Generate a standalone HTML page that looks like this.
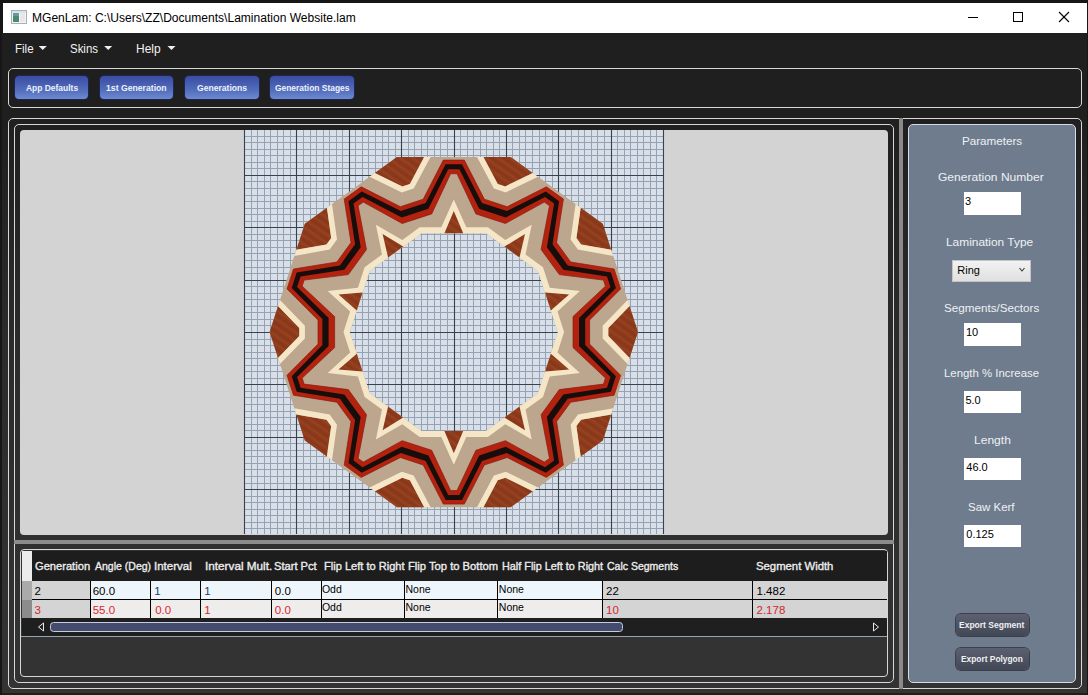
<!DOCTYPE html>
<html><head><meta charset="utf-8">
<style>
*{box-sizing:border-box;margin:0;padding:0}
html,body{width:1088px;height:695px;overflow:hidden}
body{position:relative;background:#161616;font-family:"Liberation Sans",sans-serif}
.a{position:absolute}
.t{position:absolute;white-space:nowrap;line-height:1;transform-origin:0 0}
#app{left:2px;top:33px;width:1085px;height:662px;background:linear-gradient(#1f1f1f 0px,#1f1f1f 80px,#2b2b2b 300px,#333 640px)}
#title{left:3px;top:3px;width:1084px;height:30px;background:#fff}
.bord{border:1px solid #d8d8d8}
.btn{position:absolute;top:76px;height:23px;border-radius:4px;background:linear-gradient(#3a4ba3,#5470bd 65%,#6f8ad2);box-shadow:0 0 0 1px #1c2650}
.inp{position:absolute;background:#fff;left:963.5px;width:57px;height:22.5px}
.xb{position:absolute;left:956px;width:73px;height:22px;border-radius:5px;background:linear-gradient(#5c6070,#424755);box-shadow:0 0 0 1px #3a3f4a}
.mn{stroke:#94a2b2;stroke-width:1}
.mj{stroke:#36424c;stroke-width:1.1}
</style></head><body>
<div id="app" class="a"></div>
<div id="title" class="a"></div>
<svg class="a" style="left:11px;top:10px" width="16" height="14" viewBox="0 0 16 14">
 <rect x="0.5" y="0.5" width="15" height="13" fill="#f2f6f8" stroke="#a8b0b2"/>
 <rect x="1" y="1" width="14" height="2" fill="#d8e4ec"/>
 <rect x="2" y="3" width="6" height="9" fill="#4a8878"/>
 <rect x="2" y="3" width="6" height="3" fill="#6a98a0"/>
 <rect x="9" y="3" width="5" height="9" fill="#ece4e6"/>
</svg>
<svg class="a" style="left:960px;top:8px" width="120" height="20">
 <line x1="8" y1="9.5" x2="18" y2="9.5" stroke="#000" stroke-width="1"/>
 <rect x="53.5" y="4.5" width="9" height="9" fill="none" stroke="#000" stroke-width="1"/>
 <line x1="99" y1="4" x2="109" y2="14" stroke="#000" stroke-width="1.1"/>
 <line x1="109" y1="4" x2="99" y2="14" stroke="#000" stroke-width="1.1"/>
</svg>
<svg class="a" style="left:0;top:40px" width="200" height="20">
 <polygon points="38.7,6 46.8,6 42.75,10" fill="#f0f0f0"/>
 <polygon points="104.2,6 112.2,6 108.2,10" fill="#f0f0f0"/>
 <polygon points="167.5,6 175.5,6 171.5,10" fill="#f0f0f0"/>
</svg>
<div class="a bord" style="left:8px;top:68px;width:1074px;height:40px;border-radius:5px"></div>
<div class="btn" style="left:15px;width:73px"></div>
<div class="btn" style="left:100px;width:73px"></div>
<div class="btn" style="left:185px;width:74px"></div>
<div class="btn" style="left:270px;width:84px"></div>
<div class="a bord" style="left:8px;top:118px;width:1074px;height:571px;border-radius:5px"></div>
<div class="a bord" style="left:14px;top:124px;width:880px;height:559px;border-radius:5px"></div>
<div class="a" style="left:899px;top:118px;width:4px;height:571px;background:#8a8a8a"></div>
<div class="a" style="left:14px;top:540px;width:880px;height:4px;background:#8c8c8c"></div>
<div class="a" style="left:20px;top:130px;width:868px;height:405px;background:#d3d3d3;border-radius:4px;overflow:hidden"></div>
<svg class="a" style="left:0;top:0" width="1088" height="695">
 <defs><pattern id="wood" width="13" height="7" patternUnits="userSpaceOnUse" patternTransform="rotate(35)">
  <rect width="13" height="7" fill="#8e3b1c"/>
  <path d="M0,1.5 Q6,0.5 13,1.8" stroke="#6e2810" stroke-width="0.9" fill="none" opacity=".4"/>
  <path d="M0,4.5 Q7,5.8 13,4.6" stroke="#b85e30" stroke-width="1" fill="none" opacity=".35"/>
 </pattern></defs>
 <rect x="244.6" y="130" width="418.79999999999995" height="404" fill="#d8dfe8"/>
 <line x1="251.50" y1="130" x2="251.50" y2="534" class="mn"/>
<line x1="257.50" y1="130" x2="257.50" y2="534" class="mn"/>
<line x1="264.50" y1="130" x2="264.50" y2="534" class="mn"/>
<line x1="270.50" y1="130" x2="270.50" y2="534" class="mn"/>
<line x1="277.50" y1="130" x2="277.50" y2="534" class="mn"/>
<line x1="283.50" y1="130" x2="283.50" y2="534" class="mn"/>
<line x1="290.50" y1="130" x2="290.50" y2="534" class="mn"/>
<line x1="303.50" y1="130" x2="303.50" y2="534" class="mn"/>
<line x1="310.50" y1="130" x2="310.50" y2="534" class="mn"/>
<line x1="316.50" y1="130" x2="316.50" y2="534" class="mn"/>
<line x1="323.50" y1="130" x2="323.50" y2="534" class="mn"/>
<line x1="329.50" y1="130" x2="329.50" y2="534" class="mn"/>
<line x1="336.50" y1="130" x2="336.50" y2="534" class="mn"/>
<line x1="342.50" y1="130" x2="342.50" y2="534" class="mn"/>
<line x1="355.50" y1="130" x2="355.50" y2="534" class="mn"/>
<line x1="362.50" y1="130" x2="362.50" y2="534" class="mn"/>
<line x1="368.50" y1="130" x2="368.50" y2="534" class="mn"/>
<line x1="375.50" y1="130" x2="375.50" y2="534" class="mn"/>
<line x1="382.50" y1="130" x2="382.50" y2="534" class="mn"/>
<line x1="388.50" y1="130" x2="388.50" y2="534" class="mn"/>
<line x1="395.50" y1="130" x2="395.50" y2="534" class="mn"/>
<line x1="408.50" y1="130" x2="408.50" y2="534" class="mn"/>
<line x1="414.50" y1="130" x2="414.50" y2="534" class="mn"/>
<line x1="421.50" y1="130" x2="421.50" y2="534" class="mn"/>
<line x1="427.50" y1="130" x2="427.50" y2="534" class="mn"/>
<line x1="434.50" y1="130" x2="434.50" y2="534" class="mn"/>
<line x1="440.50" y1="130" x2="440.50" y2="534" class="mn"/>
<line x1="447.50" y1="130" x2="447.50" y2="534" class="mn"/>
<line x1="460.50" y1="130" x2="460.50" y2="534" class="mn"/>
<line x1="467.50" y1="130" x2="467.50" y2="534" class="mn"/>
<line x1="473.50" y1="130" x2="473.50" y2="534" class="mn"/>
<line x1="480.50" y1="130" x2="480.50" y2="534" class="mn"/>
<line x1="486.50" y1="130" x2="486.50" y2="534" class="mn"/>
<line x1="493.50" y1="130" x2="493.50" y2="534" class="mn"/>
<line x1="499.50" y1="130" x2="499.50" y2="534" class="mn"/>
<line x1="512.50" y1="130" x2="512.50" y2="534" class="mn"/>
<line x1="519.50" y1="130" x2="519.50" y2="534" class="mn"/>
<line x1="525.50" y1="130" x2="525.50" y2="534" class="mn"/>
<line x1="532.50" y1="130" x2="532.50" y2="534" class="mn"/>
<line x1="539.50" y1="130" x2="539.50" y2="534" class="mn"/>
<line x1="545.50" y1="130" x2="545.50" y2="534" class="mn"/>
<line x1="552.50" y1="130" x2="552.50" y2="534" class="mn"/>
<line x1="565.50" y1="130" x2="565.50" y2="534" class="mn"/>
<line x1="571.50" y1="130" x2="571.50" y2="534" class="mn"/>
<line x1="578.50" y1="130" x2="578.50" y2="534" class="mn"/>
<line x1="584.50" y1="130" x2="584.50" y2="534" class="mn"/>
<line x1="591.50" y1="130" x2="591.50" y2="534" class="mn"/>
<line x1="597.50" y1="130" x2="597.50" y2="534" class="mn"/>
<line x1="604.50" y1="130" x2="604.50" y2="534" class="mn"/>
<line x1="617.50" y1="130" x2="617.50" y2="534" class="mn"/>
<line x1="624.50" y1="130" x2="624.50" y2="534" class="mn"/>
<line x1="630.50" y1="130" x2="630.50" y2="534" class="mn"/>
<line x1="637.50" y1="130" x2="637.50" y2="534" class="mn"/>
<line x1="643.50" y1="130" x2="643.50" y2="534" class="mn"/>
<line x1="650.50" y1="130" x2="650.50" y2="534" class="mn"/>
<line x1="656.50" y1="130" x2="656.50" y2="534" class="mn"/>
<line x1="244.60" y1="136.50" x2="663.40" y2="136.50" class="mn"/>
<line x1="244.60" y1="142.50" x2="663.40" y2="142.50" class="mn"/>
<line x1="244.60" y1="149.50" x2="663.40" y2="149.50" class="mn"/>
<line x1="244.60" y1="155.50" x2="663.40" y2="155.50" class="mn"/>
<line x1="244.60" y1="162.50" x2="663.40" y2="162.50" class="mn"/>
<line x1="244.60" y1="168.50" x2="663.40" y2="168.50" class="mn"/>
<line x1="244.60" y1="181.50" x2="663.40" y2="181.50" class="mn"/>
<line x1="244.60" y1="188.50" x2="663.40" y2="188.50" class="mn"/>
<line x1="244.60" y1="195.50" x2="663.40" y2="195.50" class="mn"/>
<line x1="244.60" y1="201.50" x2="663.40" y2="201.50" class="mn"/>
<line x1="244.60" y1="208.50" x2="663.40" y2="208.50" class="mn"/>
<line x1="244.60" y1="214.50" x2="663.40" y2="214.50" class="mn"/>
<line x1="244.60" y1="221.50" x2="663.40" y2="221.50" class="mn"/>
<line x1="244.60" y1="234.50" x2="663.40" y2="234.50" class="mn"/>
<line x1="244.60" y1="240.50" x2="663.40" y2="240.50" class="mn"/>
<line x1="244.60" y1="247.50" x2="663.40" y2="247.50" class="mn"/>
<line x1="244.60" y1="253.50" x2="663.40" y2="253.50" class="mn"/>
<line x1="244.60" y1="260.50" x2="663.40" y2="260.50" class="mn"/>
<line x1="244.60" y1="267.50" x2="663.40" y2="267.50" class="mn"/>
<line x1="244.60" y1="273.50" x2="663.40" y2="273.50" class="mn"/>
<line x1="244.60" y1="286.50" x2="663.40" y2="286.50" class="mn"/>
<line x1="244.60" y1="293.50" x2="663.40" y2="293.50" class="mn"/>
<line x1="244.60" y1="299.50" x2="663.40" y2="299.50" class="mn"/>
<line x1="244.60" y1="306.50" x2="663.40" y2="306.50" class="mn"/>
<line x1="244.60" y1="312.50" x2="663.40" y2="312.50" class="mn"/>
<line x1="244.60" y1="319.50" x2="663.40" y2="319.50" class="mn"/>
<line x1="244.60" y1="325.50" x2="663.40" y2="325.50" class="mn"/>
<line x1="244.60" y1="339.50" x2="663.40" y2="339.50" class="mn"/>
<line x1="244.60" y1="345.50" x2="663.40" y2="345.50" class="mn"/>
<line x1="244.60" y1="352.50" x2="663.40" y2="352.50" class="mn"/>
<line x1="244.60" y1="358.50" x2="663.40" y2="358.50" class="mn"/>
<line x1="244.60" y1="365.50" x2="663.40" y2="365.50" class="mn"/>
<line x1="244.60" y1="371.50" x2="663.40" y2="371.50" class="mn"/>
<line x1="244.60" y1="378.50" x2="663.40" y2="378.50" class="mn"/>
<line x1="244.60" y1="391.50" x2="663.40" y2="391.50" class="mn"/>
<line x1="244.60" y1="397.50" x2="663.40" y2="397.50" class="mn"/>
<line x1="244.60" y1="404.50" x2="663.40" y2="404.50" class="mn"/>
<line x1="244.60" y1="411.50" x2="663.40" y2="411.50" class="mn"/>
<line x1="244.60" y1="417.50" x2="663.40" y2="417.50" class="mn"/>
<line x1="244.60" y1="424.50" x2="663.40" y2="424.50" class="mn"/>
<line x1="244.60" y1="430.50" x2="663.40" y2="430.50" class="mn"/>
<line x1="244.60" y1="443.50" x2="663.40" y2="443.50" class="mn"/>
<line x1="244.60" y1="450.50" x2="663.40" y2="450.50" class="mn"/>
<line x1="244.60" y1="456.50" x2="663.40" y2="456.50" class="mn"/>
<line x1="244.60" y1="463.50" x2="663.40" y2="463.50" class="mn"/>
<line x1="244.60" y1="469.50" x2="663.40" y2="469.50" class="mn"/>
<line x1="244.60" y1="476.50" x2="663.40" y2="476.50" class="mn"/>
<line x1="244.60" y1="483.50" x2="663.40" y2="483.50" class="mn"/>
<line x1="244.60" y1="496.50" x2="663.40" y2="496.50" class="mn"/>
<line x1="244.60" y1="502.50" x2="663.40" y2="502.50" class="mn"/>
<line x1="244.60" y1="509.50" x2="663.40" y2="509.50" class="mn"/>
<line x1="244.60" y1="515.50" x2="663.40" y2="515.50" class="mn"/>
<line x1="244.60" y1="522.50" x2="663.40" y2="522.50" class="mn"/>
<line x1="244.60" y1="528.50" x2="663.40" y2="528.50" class="mn"/>
<line x1="244.50" y1="130" x2="244.50" y2="534" class="mj"/>
<line x1="296.50" y1="130" x2="296.50" y2="534" class="mj"/>
<line x1="349.50" y1="130" x2="349.50" y2="534" class="mj"/>
<line x1="401.50" y1="130" x2="401.50" y2="534" class="mj"/>
<line x1="454.50" y1="130" x2="454.50" y2="534" class="mj"/>
<line x1="506.50" y1="130" x2="506.50" y2="534" class="mj"/>
<line x1="558.50" y1="130" x2="558.50" y2="534" class="mj"/>
<line x1="611.50" y1="130" x2="611.50" y2="534" class="mj"/>
<line x1="663.50" y1="130" x2="663.50" y2="534" class="mj"/>
<line x1="244.60" y1="175.50" x2="663.40" y2="175.50" class="mj"/>
<line x1="244.60" y1="227.50" x2="663.40" y2="227.50" class="mj"/>
<line x1="244.60" y1="280.50" x2="663.40" y2="280.50" class="mj"/>
<line x1="244.60" y1="332.50" x2="663.40" y2="332.50" class="mj"/>
<line x1="244.60" y1="384.50" x2="663.40" y2="384.50" class="mj"/>
<line x1="244.60" y1="437.50" x2="663.40" y2="437.50" class="mj"/>
<line x1="244.60" y1="489.50" x2="663.40" y2="489.50" class="mj"/>
 <path d="M602.8,223.8 510.7,156.9 396.9,156.9 304.8,223.8 269.6,332.1 304.8,440.4 396.9,507.3 510.7,507.3 602.8,440.4 638.0,332.1ZM537.9,393.2 485.9,431.0 421.7,431.0 369.7,393.2 349.8,332.1 369.7,271.0 421.7,233.2 485.9,233.2 537.9,271.0 557.8,332.1Z" fill="#bca68e" fill-rule="evenodd"/>
 <path d="M424.2,156.9 396.9,156.9 374.8,173.0 402.3,186.4 409.9,183.9ZM532.8,173.0 510.7,156.9 483.4,156.9 497.7,183.9 505.3,186.4ZM326.9,207.8 304.8,223.8 296.3,249.8 326.5,244.5 331.2,238.1ZM576.4,238.1 581.1,244.5 611.3,249.8 602.8,223.8 580.7,207.8ZM299.3,336.1 299.3,328.1 278.0,306.1 269.6,332.1 278.0,358.1ZM629.6,358.1 638.0,332.1 629.6,306.1 608.3,328.1 608.3,336.1ZM296.3,414.4 304.8,440.4 326.9,456.4 331.2,426.1 326.5,419.7ZM580.7,456.4 602.8,440.4 611.3,414.4 581.1,419.7 576.4,426.1ZM409.9,480.3 402.3,477.8 374.8,491.2 396.9,507.3 424.2,507.3ZM505.3,477.8 497.7,480.3 483.4,507.3 510.7,507.3 532.8,491.2Z" fill="url(#wood)"/>
 <path d="M602.7,338.4 627.6,364.1 638.0,332.1 627.6,300.1 602.7,325.8ZM629.6,358.1 608.3,336.1 608.3,328.1 629.6,306.1 638.0,332.1ZM613.2,255.9 602.8,223.8 611.3,249.8 581.1,244.5 576.4,238.1 580.7,207.8 575.6,204.0 570.6,239.5 577.9,249.6ZM570.6,424.7 575.6,460.2 580.7,456.4 576.4,426.1 581.1,419.7 611.3,414.4 602.8,440.4 613.2,408.3 577.9,414.6ZM505.8,192.4 538.0,176.7 532.8,173.0 505.3,186.4 497.7,183.9 483.4,156.9 477.0,156.9 493.9,188.6ZM477.0,507.3 510.7,507.3 538.0,487.5 505.8,471.8 493.9,475.6ZM483.4,507.3 497.7,480.3 505.3,477.8 532.8,491.2 510.7,507.3ZM369.6,487.5 396.9,507.3 374.8,491.2 402.3,477.8 409.9,480.3 424.2,507.3 430.6,507.3 413.7,475.6 401.8,471.8ZM413.7,188.6 430.6,156.9 424.2,156.9 409.9,183.9 402.3,186.4 374.8,173.0 396.9,156.9 369.6,176.7 401.8,192.4ZM337.0,239.5 332.0,204.0 304.8,223.8 294.4,255.9 329.7,249.6ZM326.9,207.8 331.2,238.1 326.5,244.5 296.3,249.8 304.8,223.8ZM329.7,414.6 294.4,408.3 296.3,414.4 326.5,419.7 331.2,426.1 326.9,456.4 332.0,460.2 337.0,424.7ZM280.0,300.1 278.0,306.1 299.3,328.1 299.3,336.1 278.0,358.1 280.0,364.1 304.9,338.4 304.9,325.8Z" fill="#f4e6c6"/>
 <path d="M620.6,288.9 614.1,269.0 570.7,262.0 556.6,242.6 563.4,199.1 546.4,186.8 507.2,206.7 484.4,199.2 464.3,160.1 443.3,160.1 423.2,199.2 400.4,206.7 361.2,186.8 344.2,199.1 351.0,242.6 336.9,262.0 293.5,269.0 287.0,288.9 318.0,320.1 318.0,344.1 287.0,375.3 293.5,395.2 336.9,402.2 351.0,421.6 344.2,465.1 361.2,477.4 400.4,457.5 423.2,465.0 443.3,504.1 464.3,504.1 484.4,465.0 507.2,457.5 546.4,477.4 563.4,465.1 556.6,421.6 570.7,402.2 614.1,395.2 620.6,375.3 589.6,344.1 589.6,320.1ZM603.5,384.1 559.3,389.6 541.1,414.7 549.5,458.4 544.3,462.1 505.4,440.7 475.9,450.3 457.0,490.5 450.6,490.5 431.7,450.3 402.2,440.7 363.3,462.1 358.1,458.4 366.5,414.7 348.3,389.6 304.1,384.1 302.2,378.0 334.6,347.6 334.6,316.6 302.2,286.2 304.1,280.1 348.3,274.6 366.5,249.5 358.1,205.8 363.3,202.1 402.2,223.5 431.7,213.9 450.6,173.7 457.0,173.7 475.9,213.9 505.4,223.5 544.3,202.1 549.5,205.8 541.1,249.5 559.3,274.6 603.5,280.1 605.4,286.2 573.0,316.6 573.0,347.6 605.4,378.0Z" fill="#b3220f" fill-rule="evenodd" stroke="#8a1a10" stroke-width="0.7"/>
 <path d="M615.9,288.0 610.9,272.4 567.7,265.4 552.5,244.3 559.1,201.2 545.8,191.5 506.8,211.1 482.0,203.1 462.0,164.3 445.6,164.3 425.6,203.1 400.8,211.1 361.8,191.5 348.5,201.2 355.1,244.3 339.9,265.4 296.7,272.4 291.7,288.0 322.4,319.1 322.4,345.1 291.7,376.2 296.7,391.8 339.9,398.8 355.1,419.9 348.5,463.0 361.8,472.7 400.8,453.1 425.6,461.1 445.6,499.9 462.0,499.9 482.0,461.1 506.8,453.1 545.8,472.7 559.1,463.0 552.5,419.9 567.7,398.8 610.9,391.8 615.9,376.2 585.2,345.1 585.2,319.1ZM607.0,387.8 563.3,394.4 546.9,417.0 554.1,460.6 545.0,467.2 505.8,446.8 479.2,455.5 459.4,495.0 448.2,495.0 428.4,455.5 401.8,446.8 362.6,467.2 353.5,460.6 360.7,417.0 344.3,394.4 300.6,387.8 297.1,377.1 328.6,346.1 328.6,318.1 297.1,287.1 300.6,276.4 344.3,269.8 360.7,247.2 353.5,203.6 362.6,197.0 401.8,217.4 428.4,208.7 448.2,169.2 459.4,169.2 479.2,208.7 505.8,217.4 545.0,197.0 554.1,203.6 546.9,247.2 563.3,269.8 607.0,276.4 610.5,287.1 579.0,318.1 579.0,346.1 610.5,377.1Z" fill="#170d0b" fill-rule="evenodd"/>
 <path d="M419.7,227.2 402.3,239.9 375.9,224.8 382.0,254.6 364.6,267.3 357.9,287.8 327.7,291.1 350.1,311.6 343.5,332.1 350.1,352.6 327.7,373.1 357.9,376.4 364.6,396.9 382.0,409.6 375.9,439.4 402.3,424.3 419.7,437.0 441.3,437.0 453.8,464.7 466.3,437.0 487.9,437.0 505.3,424.3 531.7,439.4 525.6,409.6 543.0,396.9 549.7,376.4 579.9,373.1 557.5,352.6 564.1,332.1 557.5,311.6 579.9,291.1 549.7,287.8 543.0,267.3 525.6,254.6 531.7,224.8 505.3,239.9 487.9,227.2 466.3,227.2 453.8,199.5 441.3,227.2ZM485.9,431.0 421.7,431.0 369.7,393.2 349.8,332.1 369.7,271.0 421.7,233.2 485.9,233.2 537.9,271.0 557.8,332.1 537.9,393.2Z" fill="#f4e6c6" fill-rule="evenodd"/>
 <path d="M453.8,210.9 444.4,233.2 463.2,233.2ZM382.6,234.0 388.1,257.6 403.2,246.6ZM525.0,234.0 504.4,246.6 519.5,257.6ZM356.8,310.4 362.6,292.6 338.5,294.6ZM545.0,292.6 550.8,310.4 569.1,294.6ZM338.5,369.6 362.6,371.6 356.8,353.8ZM569.1,369.6 550.8,353.8 545.0,371.6ZM382.6,430.2 403.2,417.6 388.1,406.6ZM519.5,406.6 504.4,417.6 525.0,430.2ZM463.2,431.0 444.4,431.0 453.8,453.3Z" fill="url(#wood)"/>
</svg>
<div class="a" style="left:20px;top:549px;width:868px;height:128px;border:1px solid #d4d6d8;border-radius:4px;background:#333"></div>
<div class="a" style="left:22px;top:551px;width:865px;height:30px;background:#1d1d1d"></div>
<div class="a" style="left:22px;top:551px;width:10px;height:30px;background:#ececec"></div>
<div class="a" style="left:22px;top:581px;width:10px;height:19px;background:#aaa"></div>
<div class="a" style="left:22px;top:600px;width:10px;height:18px;background:#8c8c8c"></div>
<div class="a" style="left:32px;top:581px;width:855px;height:37px;background:#000"></div>
<div class="a" style="left:32px;top:581px;width:58px;height:18px;background:#d4d4d4"></div>
<div class="a" style="left:91px;top:581px;width:59px;height:18px;background:#eef6fb"></div>
<div class="a" style="left:151px;top:581px;width:49px;height:18px;background:#eef6fb"></div>
<div class="a" style="left:201px;top:581px;width:70px;height:18px;background:#eef6fb"></div>
<div class="a" style="left:272px;top:581px;width:49px;height:18px;background:#eef6fb"></div>
<div class="a" style="left:322px;top:581px;width:82px;height:18px;background:#eef6fb"></div>
<div class="a" style="left:405px;top:581px;width:92px;height:18px;background:#eef6fb"></div>
<div class="a" style="left:498px;top:581px;width:104px;height:18px;background:#eef6fb"></div>
<div class="a" style="left:603px;top:581px;width:149px;height:18px;background:#d4d4d4"></div>
<div class="a" style="left:753px;top:581px;width:134px;height:18px;background:#d4d4d4"></div>
<div class="a" style="left:32px;top:600px;width:58px;height:18px;background:#d4d4d4"></div>
<div class="a" style="left:91px;top:600px;width:59px;height:18px;background:#efecec"></div>
<div class="a" style="left:151px;top:600px;width:49px;height:18px;background:#efecec"></div>
<div class="a" style="left:201px;top:600px;width:70px;height:18px;background:#efecec"></div>
<div class="a" style="left:272px;top:600px;width:49px;height:18px;background:#efecec"></div>
<div class="a" style="left:322px;top:600px;width:82px;height:18px;background:#efecec"></div>
<div class="a" style="left:405px;top:600px;width:92px;height:18px;background:#efecec"></div>
<div class="a" style="left:498px;top:600px;width:104px;height:18px;background:#efecec"></div>
<div class="a" style="left:603px;top:600px;width:149px;height:18px;background:#d4d4d4"></div>
<div class="a" style="left:753px;top:600px;width:134px;height:18px;background:#d4d4d4"></div>
<div class="a" style="left:22px;top:618px;width:865px;height:18px;background:#1f1f1f"></div>
<svg class="a" style="left:22px;top:618px" width="865" height="18">
 <polygon points="16.5,9 21.5,5 21.5,13" fill="none" stroke="#e8e8e8" stroke-width="1"/>
 <rect x="28.5" y="4.5" width="572" height="9" rx="3" fill="#444c6e" stroke="#c8cbe0" stroke-width="1"/>
 <polygon points="856.5,9 851.5,5 851.5,13" fill="none" stroke="#e8e8e8" stroke-width="1"/>
</svg>
<div class="a" style="left:21px;top:636px;width:866px;height:1px;background:#9aa4ae"></div>
<div class="a" style="left:908px;top:124px;width:168px;height:559px;background:#6e7c8d;border:1px solid #d6dce4;border-radius:5px"></div>
<div class="inp" style="top:192.2px"></div>
<div class="a" style="left:952.3px;top:259.7px;width:79px;height:22px;background:linear-gradient(#f2f2f2,#e0e0e0);border:1px solid #c4c4c4"></div>
<svg class="a" style="left:1018px;top:266px" width="10" height="8"><polyline points="1.5,2 4,5 6.5,2" fill="none" stroke="#333" stroke-width="1.1"/></svg>
<div class="inp" style="top:323.2px"></div>
<div class="inp" style="top:390.7px"></div>
<div class="inp" style="top:457.6px"></div>
<div class="inp" style="top:524.7px"></div>
<div class="xb" style="top:614px"></div>
<div class="xb" style="top:648px"></div>
<div class="t" style="left:34.50px;top:585.50px;font-size:11.5px;font-weight:normal;color:#000;transform:scaleX(1.0000);">2</div>
<div class="t" style="left:92.70px;top:585.50px;font-size:11.5px;font-weight:normal;color:#000;transform:scaleX(1.0000);">60.0</div>
<div class="t" style="left:154.20px;top:585.50px;font-size:11.5px;font-weight:normal;color:#20405e;transform:scaleX(1.0000);">1</div>
<div class="t" style="left:204.30px;top:585.50px;font-size:11.5px;font-weight:normal;color:#20405e;transform:scaleX(1.0000);">1</div>
<div class="t" style="left:274.80px;top:585.50px;font-size:11.5px;font-weight:normal;color:#000;transform:scaleX(1.0000);">0.0</div>
<div class="t" style="left:321.90px;top:583.70px;font-size:10.5px;font-weight:normal;color:#000;transform:scaleX(1.0000);">Odd</div>
<div class="t" style="left:405.50px;top:583.70px;font-size:10.5px;font-weight:normal;color:#000;transform:scaleX(1.0000);">None</div>
<div class="t" style="left:498.80px;top:583.70px;font-size:10.5px;font-weight:normal;color:#000;transform:scaleX(1.0000);">None</div>
<div class="t" style="left:606.10px;top:585.50px;font-size:11.5px;font-weight:normal;color:#000;transform:scaleX(1.0000);">22</div>
<div class="t" style="left:756.50px;top:585.50px;font-size:11.5px;font-weight:normal;color:#000;transform:scaleX(1.0000);">1.482</div>
<div class="t" style="left:34.50px;top:604.90px;font-size:11.5px;font-weight:normal;color:#d8262e;transform:scaleX(1.0000);">3</div>
<div class="t" style="left:92.70px;top:604.90px;font-size:11.5px;font-weight:normal;color:#d8262e;transform:scaleX(1.0000);">55.0</div>
<div class="t" style="left:155.20px;top:604.90px;font-size:11.5px;font-weight:normal;color:#d8262e;transform:scaleX(1.0000);">0.0</div>
<div class="t" style="left:204.30px;top:604.90px;font-size:11.5px;font-weight:normal;color:#d8262e;transform:scaleX(1.0000);">1</div>
<div class="t" style="left:274.80px;top:604.90px;font-size:11.5px;font-weight:normal;color:#d8262e;transform:scaleX(1.0000);">0.0</div>
<div class="t" style="left:321.90px;top:602.40px;font-size:10.5px;font-weight:normal;color:#000;transform:scaleX(1.0000);">Odd</div>
<div class="t" style="left:405.50px;top:602.40px;font-size:10.5px;font-weight:normal;color:#000;transform:scaleX(1.0000);">None</div>
<div class="t" style="left:498.80px;top:602.40px;font-size:10.5px;font-weight:normal;color:#000;transform:scaleX(1.0000);">None</div>
<div class="t" style="left:606.10px;top:604.90px;font-size:11.5px;font-weight:normal;color:#d8262e;transform:scaleX(1.0000);">10</div>
<div class="t" style="left:756.50px;top:604.90px;font-size:11.5px;font-weight:normal;color:#d8262e;transform:scaleX(1.0000);">2.178</div>
<div class="t" style="left:965.10px;top:196.40px;font-size:11px;font-weight:normal;color:#000;transform:scaleX(1.0000);">3</div>
<div class="t" style="left:966.00px;top:327.20px;font-size:11px;font-weight:normal;color:#000;transform:scaleX(1.0000);">10</div>
<div class="t" style="left:965.40px;top:395.20px;font-size:11px;font-weight:normal;color:#000;transform:scaleX(1.0000);">5.0</div>
<div class="t" style="left:966.30px;top:461.50px;font-size:11px;font-weight:normal;color:#000;transform:scaleX(1.0000);">46.0</div>
<div class="t" style="left:966.30px;top:528.60px;font-size:11px;font-weight:normal;color:#000;transform:scaleX(1.0000);">0.125</div>
<div class="t" style="left:957.30px;top:265.00px;font-size:11px;font-weight:normal;color:#000;transform:scaleX(1.0000);">Ring</div>
<div class="t" style="left:31.80px;top:12.00px;font-size:12px;font-weight:normal;color:#000;transform:scaleX(1.0037);">MGenLam: C:\Users\ZZ\Documents\Lamination Website.lam</div>
<div class="t" style="left:14.79px;top:43.20px;font-size:12.7px;font-weight:normal;color:#f2f2f2;transform:scaleX(0.9105);">File</div>
<div class="t" style="left:69.80px;top:43.20px;font-size:12.7px;font-weight:normal;color:#f2f2f2;transform:scaleX(0.9033);">Skins</div>
<div class="t" style="left:135.76px;top:43.20px;font-size:12.7px;font-weight:normal;color:#f2f2f2;transform:scaleX(0.9440);">Help</div>
<div class="t" style="left:25.80px;top:83.90px;font-size:9px;font-weight:bold;color:#eef2fc;transform:scaleX(0.9382);">App Defaults</div>
<div class="t" style="left:105.64px;top:83.90px;font-size:9px;font-weight:bold;color:#eef2fc;transform:scaleX(0.9621);">1st Generation</div>
<div class="t" style="left:196.80px;top:83.90px;font-size:9px;font-weight:bold;color:#eef2fc;transform:scaleX(0.9519);">Generations</div>
<div class="t" style="left:274.50px;top:83.90px;font-size:9px;font-weight:bold;color:#eef2fc;transform:scaleX(0.9354);">Generation Stages</div>
<div class="t" style="left:35.37px;top:560.80px;font-size:10.8px;font-weight:normal;color:#ececec;transform:scaleX(1.0308);-webkit-text-stroke:0.35px #ececec;">Generation</div>
<div class="t" style="left:95.20px;top:560.80px;font-size:10.8px;font-weight:normal;color:#ececec;transform:scaleX(0.9737);-webkit-text-stroke:0.35px #ececec;">Angle (Deg)</div>
<div class="t" style="left:154.44px;top:560.80px;font-size:10.8px;font-weight:normal;color:#ececec;transform:scaleX(1.0647);-webkit-text-stroke:0.35px #ececec;">Interval</div>
<div class="t" style="left:204.51px;top:560.80px;font-size:10.8px;font-weight:normal;color:#ececec;transform:scaleX(1.0883);-webkit-text-stroke:0.35px #ececec;">Interval Mult.</div>
<div class="t" style="left:274.37px;top:560.80px;font-size:10.8px;font-weight:normal;color:#ececec;transform:scaleX(1.0300);-webkit-text-stroke:0.35px #ececec;">Start Pct</div>
<div class="t" style="left:324.48px;top:560.80px;font-size:10.8px;font-weight:normal;color:#ececec;transform:scaleX(1.0247);-webkit-text-stroke:0.35px #ececec;">Flip Left to Right</div>
<div class="t" style="left:407.96px;top:560.80px;font-size:10.8px;font-weight:normal;color:#ececec;transform:scaleX(1.0376);-webkit-text-stroke:0.35px #ececec;">Flip Top to Bottom</div>
<div class="t" style="left:501.50px;top:560.80px;font-size:10.8px;font-weight:normal;color:#ececec;transform:scaleX(1.0030);-webkit-text-stroke:0.35px #ececec;">Half Flip Left to Right</div>
<div class="t" style="left:606.73px;top:560.80px;font-size:10.8px;font-weight:normal;color:#ececec;transform:scaleX(0.9722);-webkit-text-stroke:0.35px #ececec;">Calc Segments</div>
<div class="t" style="left:756.45px;top:560.80px;font-size:10.8px;font-weight:normal;color:#ececec;transform:scaleX(1.0486);-webkit-text-stroke:0.35px #ececec;">Segment Width</div>
<div class="t" style="left:961.52px;top:136.00px;font-size:10.8px;font-weight:normal;color:#eef1f5;transform:scaleX(1.0782);">Parameters</div>
<div class="t" style="left:938.49px;top:171.90px;font-size:10.8px;font-weight:normal;color:#eef1f5;transform:scaleX(1.1149);">Generation Number</div>
<div class="t" style="left:946.30px;top:237.40px;font-size:10.8px;font-weight:normal;color:#eef1f5;transform:scaleX(1.1026);">Lamination Type</div>
<div class="t" style="left:943.92px;top:303.00px;font-size:10.8px;font-weight:normal;color:#eef1f5;transform:scaleX(1.0805);">Segments/Sectors</div>
<div class="t" style="left:943.94px;top:368.30px;font-size:10.8px;font-weight:normal;color:#eef1f5;transform:scaleX(1.0562);">Length % Increase</div>
<div class="t" style="left:973.88px;top:434.75px;font-size:10.8px;font-weight:normal;color:#eef1f5;transform:scaleX(1.1161);">Length</div>
<div class="t" style="left:968.24px;top:501.90px;font-size:10.8px;font-weight:normal;color:#eef1f5;transform:scaleX(1.0628);">Saw Kerf</div>
<div class="t" style="left:958.95px;top:621.20px;font-size:9px;font-weight:bold;color:#eef0f2;transform:scaleX(0.9456);">Export Segment</div>
<div class="t" style="left:960.77px;top:655.00px;font-size:9px;font-weight:bold;color:#eef0f2;transform:scaleX(0.9292);">Export Polygon</div>
<div class="a" style="left:2px;top:693px;width:1085px;height:2px;background:#1e1e1e"></div>
</body></html>
